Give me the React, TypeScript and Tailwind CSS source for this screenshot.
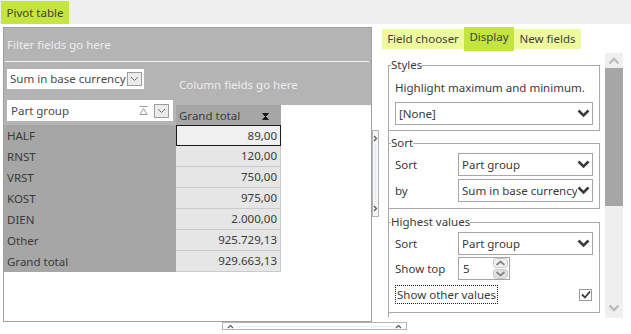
import React from 'react';

const rows = [
  { label: 'HALF', value: '89,00' },
  { label: 'RNST', value: '120,00' },
  { label: 'VRST', value: '750,00' },
  { label: 'KOST', value: '975,00' },
  { label: 'DIEN', value: '2.000,00' },
  { label: 'Other', value: '925.729,13' },
  { label: 'Grand total', value: '929.663,13' },
];

const BoldChevron = () => (
  <svg width="13" height="9" viewBox="0 0 13 9" className="shrink-0">
    <path d="M1.5 1.5l5 5 5-5" fill="none" stroke="#3c3c3c" strokeWidth="2.6" />
  </svg>
);

const SmallDrop = () => (
  <div className="shrink-0 w-[15px] h-[14px] border border-[#9c9c9c] bg-[#ececec] flex items-center justify-center">
    <svg width="9" height="6" viewBox="0 0 9 6">
      <path d="M1 1l3.5 3.5L8 1" fill="none" stroke="#707070" strokeWidth="1" />
    </svg>
  </div>
);

const Select = ({ text, w = 'w-[135px]' }: { text: string; w?: string }) => (
  <div className={`${w} h-[23px] border border-[#a6a6a6] bg-white flex items-center pl-[3px] pr-[2px]`}>
    <span className="flex-1 whitespace-nowrap overflow-hidden leading-[18px]">{text}</span>
    <BoldChevron />
  </div>
);

const Group = ({
  title,
  className,
  children,
}: {
  title: string;
  className: string;
  children: React.ReactNode;
}) => (
  <div className={`relative border-t border-r border-b border-[#a9a9a9] pl-[6px] ${className}`}>
    <span className="absolute left-[2px] -top-[9px] bg-white leading-[16px]">{title}</span>
    {children}
  </div>
);

export default function App() {
  return (
    <div className="w-[631px] h-[334px] bg-white overflow-hidden flex flex-col text-[11.5px] text-[#3a3a3a] font-['Noto_Sans',sans-serif] leading-none whitespace-nowrap">
      {/* top strip */}
      <div className="h-[24px] bg-[#efefef] flex items-start">
        <div className="ml-px mt-px h-[23px] w-[68px] bg-[#c4e442] flex items-center justify-center text-[#404040]">
          Pivot table
        </div>
      </div>

      <div className="flex h-[298px]">
        {/* pivot grid */}
        <div className="ml-[3px] mt-[3px] w-[369px] h-[295px] border border-[#a0a0a0] bg-white flex flex-col">
          <div className="h-[33px] bg-[#b4b4b4] flex items-center pl-[3px] text-[#ededed]">Filter fields go here</div>
          <div className="h-px bg-[#b4b4b4] pl-px pr-[2px]">
            <div className="h-px bg-[#f2f2f2]" />
          </div>
          <div className="flex h-[63px]">
            <div className="w-[172px] bg-[#b4b4b4] pl-[3px] pt-[7px]">
              <div className="w-[137px] h-[20px] bg-white flex items-center pl-[3px] pr-[2px] text-[#4a4a4a]">
                <span className="flex-1">Sum in base currency</span>
                <SmallDrop />
              </div>
              <div className="mt-[11px] w-[166px] h-[21px] bg-white flex items-center pl-[4px] pr-[4px] text-[#4a4a4a]">
                <span className="flex-1">Part group</span>
                <svg width="9" height="9" viewBox="0 0 9 9" className="mr-[6px]">
                  <path d="M0.5 0.5h8M4.5 2.5l-3.5 6h7z" fill="none" stroke="#9a9a9a" strokeWidth="1" />
                </svg>
                <SmallDrop />
              </div>
            </div>
            <div className="flex-1 flex flex-col">
              <div className="h-[43px] bg-[#b4b4b4] flex items-center pl-[3px] pt-[3px] text-[#ededed]">
                Column fields go here
              </div>
              <div className="h-[20px] flex">
                <div className="w-[105px] bg-[#a6a6a6] flex items-center pl-[3px] pr-[12px] pt-[2px] text-[#3a3a3a]">
                  <span className="flex-1">Grand total</span>
                  <svg width="7" height="7" viewBox="0 0 7 7">
                    <path d="M0.5 0.5h6L3.5 3.5zM3.5 3.5L0.5 6.5h6z" fill="#111" stroke="#111" strokeWidth="0.8" />
                  </svg>
                </div>
              </div>
            </div>
          </div>
          {rows.map((r, i) => (
            <div key={r.label} className="flex h-[21px]">
              <div className="w-[172px] bg-[#a6a6a6] flex items-center pl-[3px]">{r.label}</div>
              <div
                className={`w-[105px] flex items-center justify-end pr-[3px] ${
                  i === 0
                    ? 'bg-[#f0f0f0] border border-[#1a1a1a]'
                    : 'bg-[#e6e6e6] border-r border-b border-[#cacaca]'
                }`}
              >
                {r.value}
              </div>
            </div>
          ))}
        </div>

        {/* vertical splitter */}
        <div className="w-[7px] flex items-center">
          <div className="w-[7px] h-[87px] border border-[#b4b4b4] bg-[#f6f6f6] flex flex-col items-center justify-between py-[4px]">
            <svg width="5" height="7" viewBox="0 0 5 7">
              <path d="M1 1l2.5 2.5L1 6" fill="none" stroke="#555" strokeWidth="1.2" />
            </svg>
            <div className="flex-1 border-l border-dotted border-[#bfe3f2] my-[3px]" />
            <svg width="5" height="7" viewBox="0 0 5 7">
              <path d="M1 1l2.5 2.5L1 6" fill="none" stroke="#555" strokeWidth="1.2" />
            </svg>
          </div>
        </div>

        {/* settings side */}
        <div className="flex-1 flex flex-col">
          <div className="mt-[3px] ml-[3px] h-[24px] flex items-center">
            <div className="h-[20px] w-[82px] bg-[#eefa9e] flex items-center justify-center text-[#404040]">Field chooser</div>
            <div className="h-[24px] w-[50px] bg-[#c4e442] flex items-center justify-center pb-[4px] text-[#404040]">Display</div>
            <div className="h-[20px] w-[67px] bg-[#eefa9e] flex items-center justify-center text-[#404040]">New fields</div>
          </div>
          <div className="mt-[2px] flex">
            <div className="ml-[9px] w-[212px] pt-[12px]">
              <div className="h-[252px] border-l border-[#a9a9a9]">
                <Group title="Styles" className="h-[66px] pt-[14px]">
                  <div className="leading-[16px]">Highlight maximum and minimum.</div>
                  <div className="mt-[6px]">
                    <Select text="[None]" w="w-[198px]" />
                  </div>
                </Group>
                <Group title="Sort" className="mt-[12px] h-[66px] pt-[9px]">
                  <div className="flex items-center h-[23px]">
                    <span className="w-[63px]">Sort</span>
                    <Select text="Part group" />
                  </div>
                  <div className="flex items-center h-[23px] mt-[3px]">
                    <span className="w-[63px]">by</span>
                    <Select text="Sum in base currency" />
                  </div>
                </Group>
                <Group title="Highest values" className="mt-[13px] h-[91px] pt-[9px]">
                  <div className="flex items-center h-[23px]">
                    <span className="w-[63px]">Sort</span>
                    <Select text="Part group" />
                  </div>
                  <div className="flex items-center h-[23px] mt-[2px]">
                    <span className="w-[63px]">Show top</span>
                    <div className="w-[52px] h-[23px] border border-[#a6a6a6] flex items-center pl-[4px] pr-px">
                      <span className="flex-1">5</span>
                      <div className="flex flex-col gap-px">
                        <svg width="15" height="10" viewBox="0 0 15 10">
                          <rect x="0.5" y="0.5" width="14" height="9" rx="3" fill="#f2f2f2" stroke="#c4c4c4" />
                          <path d="M3.5 7l4-3.5 4 3.5" fill="none" stroke="#8a8a8a" strokeWidth="2" />
                        </svg>
                        <svg width="15" height="10" viewBox="0 0 15 10">
                          <rect x="0.5" y="0.5" width="14" height="9" rx="3" fill="#e2e2e2" stroke="#c4c4c4" />
                          <path d="M3.5 3l4 3.5 4-3.5" fill="none" stroke="#8a8a8a" strokeWidth="2" />
                        </svg>
                      </div>
                    </div>
                  </div>
                  <div className="flex items-center h-[19px] mt-[5px] pr-[7px]">
                    <span className="flex-1">
                      <span className="border border-dotted border-[#222] px-px py-[2px] inline-block leading-[13px]">
                        Show other values
                      </span>
                    </span>
                    <div className="w-[13px] h-[12px] border border-[#9a9a9a] flex items-center justify-center">
                      <svg width="10" height="8" viewBox="0 0 10 8">
                        <path d="M1 3.5l3 3 5-6" fill="none" stroke="#3a3a3a" strokeWidth="1.8" />
                      </svg>
                    </div>
                  </div>
                </Group>
              </div>
            </div>
            {/* scrollbar */}
            <div className="ml-[5px] w-[18px] h-[265px] bg-[#efefef] flex flex-col items-center">
              <div className="h-[15px] flex items-center">
                <svg width="12" height="8" viewBox="0 0 12 8">
                  <path d="M1.5 6.5l4.5-4.5 4.5 4.5" fill="none" stroke="#bcbcbc" strokeWidth="2.4" />
                </svg>
              </div>
              <div className="w-[18px] h-[138px] bg-[#a6a6a6]" />
              <div className="flex-1" />
              <div className="h-[14px] flex items-center mb-[3px]">
                <svg width="12" height="8" viewBox="0 0 12 8">
                  <path d="M1.5 1.5l4.5 4.5 4.5-4.5" fill="none" stroke="#bcbcbc" strokeWidth="2.4" />
                </svg>
              </div>
            </div>
          </div>
        </div>
      </div>

      {/* bottom splitter */}
      <div className="pl-[222px]">
        <div className="w-[185px] h-[8px] border border-[#b4b4b4] bg-white flex items-center justify-between px-[4px]">
          <svg width="7" height="5" viewBox="0 0 7 5">
            <path d="M1 4l2.5-2.5L6 4" fill="none" stroke="#555" strokeWidth="1.2" />
          </svg>
          <div className="flex-1 border-t border-dotted border-[#bfe3f2] mx-[3px]" />
          <svg width="7" height="5" viewBox="0 0 7 5">
            <path d="M1 4l2.5-2.5L6 4" fill="none" stroke="#555" strokeWidth="1.2" />
          </svg>
        </div>
      </div>
    </div>
  );
}
